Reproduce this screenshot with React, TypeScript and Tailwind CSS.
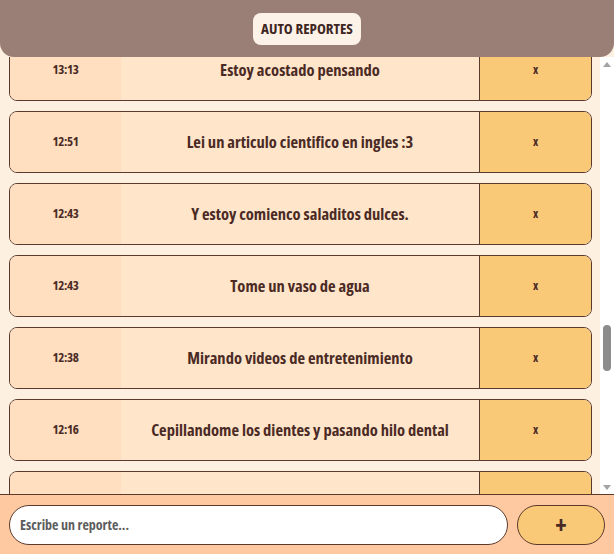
import { useEffect, useRef } from "react";

const visible = [
  { time: "13:13", text: "Estoy acostado pensando" },
  { time: "12:51", text: "Lei un articulo cientifico en ingles :3" },
  { time: "12:43", text: "Y estoy comienco saladitos dulces." },
  { time: "12:43", text: "Tome un vaso de agua" },
  { time: "12:38", text: "Mirando videos de entretenimiento" },
  { time: "12:16", text: "Cepillandome los dientes y pasando hilo dental" },
  { time: "12:02", text: "Desayunando con mi familia" },
];

const filler = [
  "Escuchando musica",
  "Revisando mis mensajes",
  "Caminando un rato",
  "Tome un vaso de agua",
  "Estudiando para el examen",
  "Ordenando mi cuarto",
];

const pad = (n: number) => String(n).padStart(2, "0");

// 34 entradas antes de las visibles, y algunas despues
const before = Array.from({ length: 34 }, (_, i) => {
  const mins = 13 * 60 + 13 + (34 - i) * 17;
  return { time: `${pad(Math.floor(mins / 60) % 24)}:${pad(mins % 60)}`, text: filler[i % filler.length] };
});
const after = Array.from({ length: 14 }, (_, i) => {
  const mins = 12 * 60 - (i + 1) * 21;
  return { time: `${pad(Math.floor(mins / 60))}:${pad(mins % 60)}`, text: filler[(i + 2) % filler.length] };
});

const reportes = [...before, ...visible, ...after];

const ReporteRow = ({ time, text }: { time: string; text: string }) => (
  <div className="grid grid-cols-[111px_1fr_111px] h-[62px] rounded-lg border border-[#5b3a2c] overflow-hidden shrink-0">
    <div className="bg-[#ffdfc0] flex items-center justify-center text-[13px] tracking-tight">{time}</div>
    <div className="bg-[#ffe5c9] border-r border-[#5b3a2c] flex items-center justify-center text-[16.5px] whitespace-nowrap">
      {text}
    </div>
    <button className="bg-[#f9c978] flex items-center justify-center text-[12px]">x</button>
  </div>
);

const Arrow = ({ up }: { up?: boolean }) => (
  <div className="h-[14px] flex items-center justify-center">
    <svg width="8" height="5" viewBox="0 0 8 5">
      <path d={up ? "M0 5 L4 0 L8 5 Z" : "M0 0 L4 5 L8 0 Z"} fill="#a3a3a3" />
    </svg>
  </div>
);

export default function App() {
  const listRef = useRef<HTMLDivElement>(null);

  useEffect(() => {
    if (listRef.current) listRef.current.scrollTop = 28 + 72 * before.length;
  }, []);

  return (
    <div
      className="h-[554px] w-full flex flex-col bg-[#fdf0e0] text-[#4a2a25] font-bold relative"
      style={{ fontFamily: '"Open Sans", "Liberation Sans", sans-serif', fontStretch: "75%" }}
    >
      <header className="h-[57px] shrink-0 bg-[#9a7f76] rounded-b-[14px] flex items-center justify-center relative z-10">
        <span className="bg-[#fdf2e8] rounded-lg px-2 h-[32px] flex items-center text-[15px] text-[#3d2622]">
          AUTO REPORTES
        </span>
      </header>

      <div className="flex-1 flex min-h-0">
        <div
          ref={listRef}
          className="flex-1 overflow-y-scroll [scrollbar-width:none] flex flex-col gap-[10px] pt-[10px] pl-[9px] pr-[8px]"
        >
          {reportes.map((r, i) => (
            <ReporteRow key={i} time={r.time} text={r.text} />
          ))}
        </div>
        <div className="w-[14px] bg-white flex flex-col">
          <Arrow up />
          <div className="flex-1 flex flex-col px-[3px]">
            <div className="h-[254px]" />
            <div className="h-[46px] rounded-full bg-[#8c8c8c]" />
          </div>
          <Arrow />
        </div>
      </div>

      <footer className="h-[60px] shrink-0 bg-[#fec9a0] border-t border-[#5b3a2c] flex items-center gap-[9px] px-[9px]">
        <input
          className="flex-1 h-[40px] rounded-full border border-[#5b3a2c] bg-white px-[10px] text-[14px] text-[#555] placeholder:text-[#5c5c5c] outline-none"
          placeholder="Escribe un reporte..."
        />
        <button className="w-[88px] h-[40px] rounded-full border border-[#5b3a2c] bg-[#f9c978] text-[24px] leading-none text-[#4a2a25]">
          +
        </button>
      </footer>
    </div>
  );
}
